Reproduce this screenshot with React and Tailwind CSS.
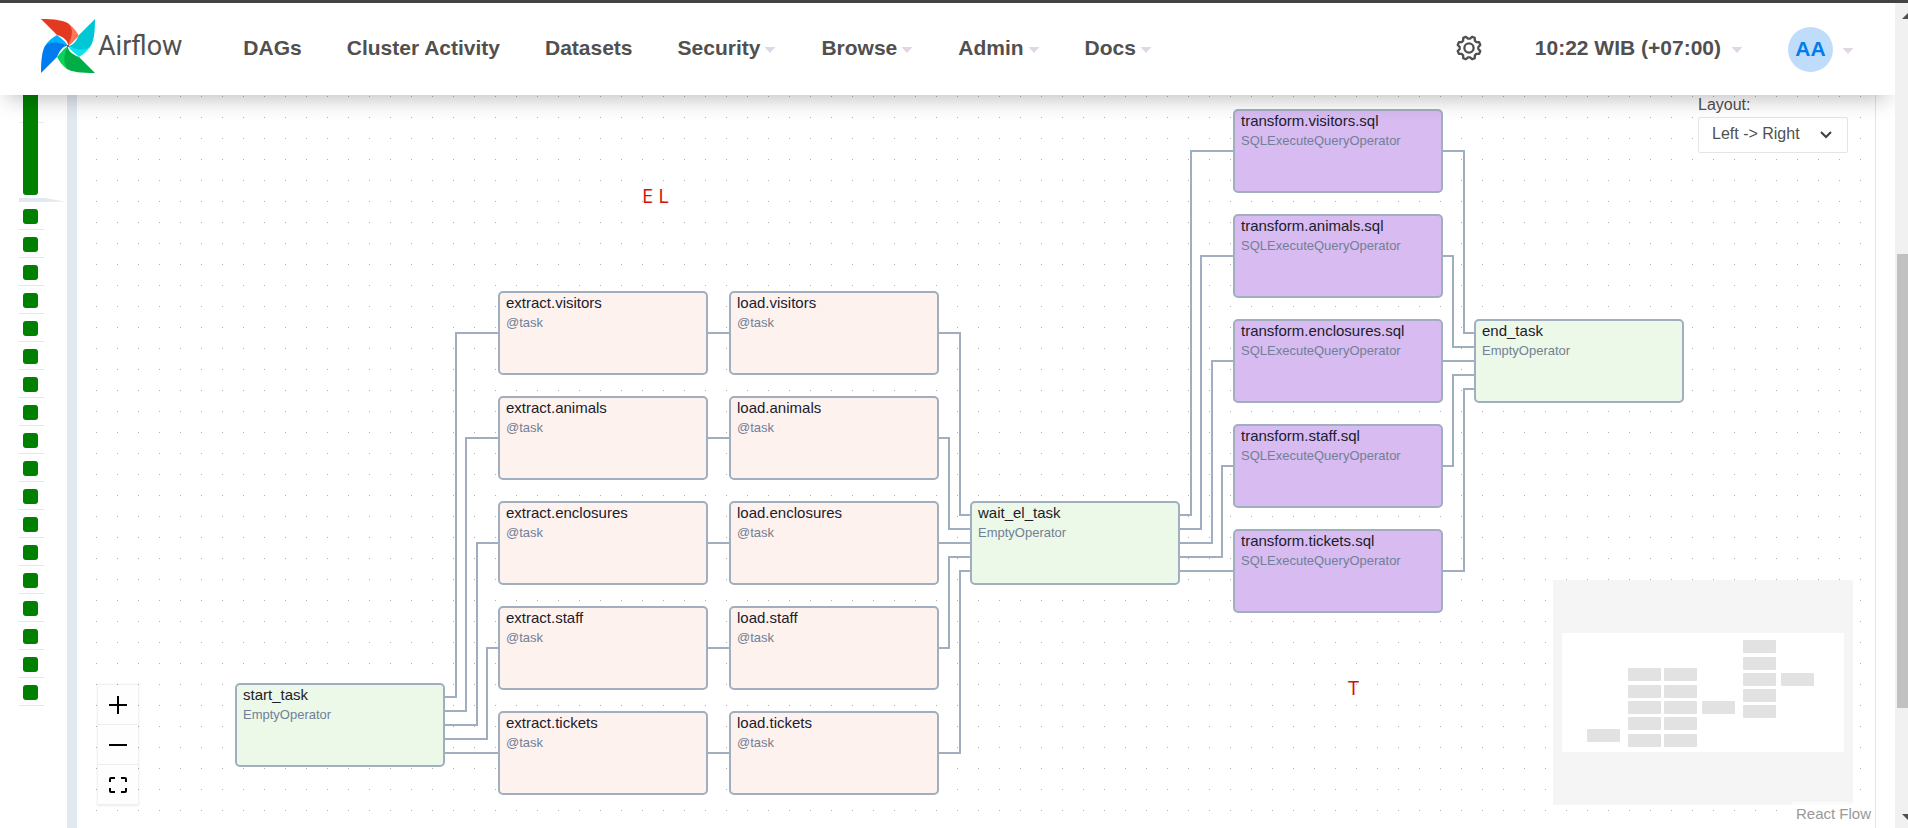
const NODE_W = 210;
const NODE_H = 84;

const subjects = ["visitors", "animals", "enclosures", "staff", "tickets"];

const green = "bg-[#ecf9e9]";
const pink = "bg-[#fef2ef]";
const purple = "bg-[#d7bbf1]";

const nodes = [
  { x: 158, y: 588, label: "start_task", op: "EmptyOperator", fill: green },
  ...subjects.map((s, i) => ({ x: 421, y: 196 + i * 105, label: `extract.${s}`, op: "@task", fill: pink })),
  ...subjects.map((s, i) => ({ x: 652, y: 196 + i * 105, label: `load.${s}`, op: "@task", fill: pink })),
  { x: 893, y: 406, label: "wait_el_task", op: "EmptyOperator", fill: green },
  ...subjects.map((s, i) => ({ x: 1156, y: 14 + i * 105, label: `transform.${s}.sql`, op: "SQLExecuteQueryOperator", fill: purple })),
  { x: 1397, y: 224, label: "end_task", op: "EmptyOperator", fill: green },
];

const edges = [
  "M368 602H379V238H422",
  "M368 616H389V343H422",
  "M368 630H400V448H422",
  "M368 644H410V553H422",
  "M368 658H422",
  "M631 238H652",
  "M631 343H652",
  "M631 448H652",
  "M631 553H652",
  "M631 658H652",
  "M862 238H883V420H893",
  "M862 343H872V434H893",
  "M862 448H893",
  "M862 553H872V462H893",
  "M862 658H883V476H893",
  "M1103 420H1114V56H1156",
  "M1103 434H1124V161H1156",
  "M1103 448H1135V266H1156",
  "M1103 462H1145V371H1156",
  "M1103 476H1156",
  "M1366 56H1387V238H1397",
  "M1366 161H1376V252H1397",
  "M1366 266H1397",
  "M1366 371H1376V280H1397",
  "M1366 476H1387V294H1397",
];

const menus = [
  { label: "DAGs" },
  { label: "Cluster Activity" },
  { label: "Datasets" },
  { label: "Security", caret: true },
  { label: "Browse", caret: true },
  { label: "Admin", caret: true },
  { label: "Docs", caret: true },
];

function Caret() {
  return (
    <svg className="mt-1 h-2 w-3 shrink-0" viewBox="0 0 12 8" aria-hidden="true">
      <path d="M0.5 1H11.5L6 7Z" fill="#e1d6e3" />
    </svg>
  );
}

function Logo() {
  return (
    <svg className="size-[54px]" viewBox="0 0 54 54" aria-hidden="true">
      <path d="M27 27C31 25 35 19 38 17C35 12 33 9 29 6C31 14 30 20 27 27Z" fill="#ff7557" />
      <path d="M27 27C28 22 21 17 16 16L0 0C12 0 25 1 29 6C33 13 30 20 27 27Z" fill="#e43921" />
      <path d="M27 27C29 31 35 35 38 38C43 35 46 32 49 28C41 31 33 30 27 27Z" fill="#11e1ee" />
      <path d="M27 27C32 27 36 21 38 16L54 0C54 13 53 23 49 28C43 32 34 31 27 27Z" fill="#00c7d4" />
      <path d="M27 27C23 29 19 35 16 38C19 43 21 46 26 50C23 42 24 33 27 27Z" fill="#04d659" />
      <path d="M27 27C26 32 33 36 38 38L54 54C40 54 31 53 26 50C22 44 23 33 27 27Z" fill="#00ad46" />
      <path d="M27 27C25 23 20 19 16 16C11 19 7 22 4 27C12 23 21 24 27 27Z" fill="#00b1fe" />
      <path d="M27 27C22 26 18 33 16 38L0 54C0 42 1 32 4 27C9 22 20 23 27 27Z" fill="#017cee" />
      <circle cx="27" cy="27" r="1" fill="#4a4848" />
    </svg>
  );
}

function Gear() {
  const corners = [
    [-7, 11.7],
    [7, 11.7],
    [16, 9.4],
    [29, 9.4],
  ];
  const points = Array.from({ length: 32 }, (_, i) => {
    const [offset, r] = corners[i % 4];
    const a = ((Math.floor(i / 4) * 45 + offset + 22.5) * Math.PI) / 180;
    return `${(13 + r * Math.cos(a)).toFixed(2)},${(13 + r * Math.sin(a)).toFixed(2)}`;
  }).join(" ");
  return (
    <svg className="size-[26px]" viewBox="0 0 26 26" fill="none" stroke="#51504f" strokeWidth="2.3" strokeLinejoin="round" aria-hidden="true">
      <polygon points={points} />
      <circle cx="13" cy="13" r="4.6" />
    </svg>
  );
}

function Header() {
  return (
    <header className="relative z-20 flex h-[92px] items-center bg-white pr-[41px] pl-[41px] text-[21px] font-bold text-[#51504f] shadow-[0_12px_20px_-8px_rgba(0,0,0,0.25)]">
      <a href="#home" className="flex items-center gap-[3px] pb-[6px]">
        <Logo />
        <span className="font-[Roboto,sans-serif] text-[27px] leading-8 font-normal">Airflow</span>
      </a>
      <nav className="ml-[61px] flex items-center gap-[45px] pb-[3px]">
        {menus.map((m) => (
          <button key={m.label} type="button" className="flex items-center gap-1 whitespace-nowrap">
            {m.label}
            {m.caret && <Caret />}
          </button>
        ))}
      </nav>
      <div className="ml-auto flex items-center">
        <button type="button" aria-label="Settings" className="mr-[53px] pb-[3px]">
          <Gear />
        </button>
        <button type="button" className="mr-[45px] flex items-center gap-[10px] pb-[3px] whitespace-nowrap">
          10:22 WIB (+07:00)
          <Caret />
        </button>
        <button type="button" className="flex items-center gap-[9px]">
          <span className="grid size-[45px] place-items-center rounded-full bg-[#bfddfb] text-[#017cee]">AA</span>
          <Caret />
        </button>
      </div>
    </header>
  );
}

function RunGrid() {
  return (
    <aside className="flex w-[67px] shrink-0 flex-col pl-[19px]" aria-label="Task runs">
      <div className="relative w-[25px] px-1">
        <div className="absolute top-[27px] left-0 h-px w-full bg-[#e2ece8]" />
        <div className="relative h-[100px] w-[15px] rounded-b-[3px] bg-[#008000]" />
      </div>
      <svg className="mt-[3px] h-1 w-[46px]" viewBox="0 0 46 4" aria-hidden="true">
        <path d="M0 0H25L46 3.4L25 4H0Z" fill="#e2e8f0" />
      </svg>
      {Array.from({ length: 18 }, (_, i) => (
        <div key={i} className="h-7 w-[25px] border-b border-[#dfe8ec] px-1 pt-[7px]">
          <div className="size-[15px] rounded-[3px] bg-[#008000]" />
        </div>
      ))}
    </aside>
  );
}

function MiniMap() {
  return (
    <svg className="absolute right-[22px] bottom-[23px] h-[225px] w-[300px] bg-white" viewBox="0 0 300 225" aria-label="Mini map">
      <path d="M0 0H300V225H0ZM9 53V172H291V53Z" fill="#f5f5f5" fillRule="evenodd" />
      {nodes.map((n) => (
        <rect
          key={n.label}
          x={Math.round(9 + n.x * 0.1566)}
          y={Math.round(58 + n.y * 0.1555)}
          width="33"
          height="13"
          rx="1"
          fill="#e2e2e2"
        />
      ))}
    </svg>
  );
}

function Controls() {
  const button = "grid size-10 place-items-center border-b border-[#eee] bg-[#fefefe]";
  return (
    <div className="absolute bottom-[23px] left-[21px] flex flex-col shadow-[0_0_2px_1px_rgba(0,0,0,0.08)]">
      <button type="button" aria-label="Zoom in" className={button}>
        <svg className="size-[18px]" viewBox="0 0 18 18" stroke="#000" strokeWidth="2"><path d="M0 9H18M9 0V18" /></svg>
      </button>
      <button type="button" aria-label="Zoom out" className={button}>
        <svg className="size-[18px]" viewBox="0 0 18 18" stroke="#000" strokeWidth="2"><path d="M0 9H18" /></svg>
      </button>
      <button type="button" aria-label="Fit view" className={button}>
        <svg className="size-[18px]" viewBox="0 0 18 18" fill="none" stroke="#000" strokeWidth="2">
          <path d="M1 6V3Q1 2 2 2H6M12 2H16Q17 2 17 3V6M17 12V15Q17 16 16 16H12M6 16H2Q1 16 1 15V12" />
        </svg>
      </button>
    </div>
  );
}

function Canvas() {
  return (
    <main className="relative min-w-0 flex-1 overflow-hidden border-r border-[#e2e4e8] bg-white bg-[radial-gradient(circle_at_0.5px_0.5px,#b0b0b4_0.6px,transparent_0.7px)] bg-size-[21px_21px] bg-position-[19px_1px]">
      <svg className="absolute top-0 left-0 h-[733px] w-[1798px]" viewBox="0 0 1798 733" fill="none" stroke="#a0aec0" strokeWidth="2" aria-hidden="true">
        {edges.map((d) => (
          <path key={d} d={d} />
        ))}
      </svg>
      {nodes.map((n) => (
        <div
          key={n.label}
          className={`absolute rounded-[5px] border-2 border-[#a0aec0] px-[6px] pt-px ${n.fill}`}
          style={{ left: n.x, top: n.y, width: NODE_W, height: NODE_H }}
        >
          <div className="text-[15px] leading-[18px] text-[#1a202c]">{n.label}</div>
          <div className="text-[13px] leading-[22px] text-[#718096]">{n.op}</div>
        </div>
      ))}
      <p className="absolute top-[87px] left-[565px] font-['Open_Sans',sans-serif] text-xl leading-7 text-[#d80c0c]">E L</p>
      <p className="absolute top-[579px] left-[1271px] font-['Open_Sans',sans-serif] text-xl leading-7 text-[#d80c0c]">T</p>
      <div className="absolute top-0 right-[27px] flex w-[150px] flex-col gap-[3px] text-base text-[#51504f]">
        <label htmlFor="layout" className="leading-[19px]">Layout:</label>
        <div className="relative">
          <select id="layout" defaultValue="lr" className="h-9 w-full appearance-none rounded-[2px] border border-[#e2e4e8] bg-white pr-8 pb-[2px] pl-[13px]">
            <option value="lr">{"Left -> Right"}</option>
            <option value="tb">{"Top -> Bottom"}</option>
          </select>
          <svg className="pointer-events-none absolute top-[14px] right-4 h-2 w-3" viewBox="0 0 12 8" fill="none" stroke="#3f3f3f" strokeWidth="2" aria-hidden="true">
            <path d="M1 1L6 6L11 1" />
          </svg>
        </div>
      </div>
      <MiniMap />
      <Controls />
      <a href="#react-flow" className="absolute right-0 bottom-[2px] bg-white/60 px-1 text-[15px] leading-6 text-[#999]">React Flow</a>
    </main>
  );
}

function ScrollBar() {
  return (
    <div className="relative flex w-[13px] shrink-0 flex-col overflow-hidden bg-[#f1f1f1] pl-[2px]" aria-hidden="true">
      <svg className="absolute top-[9px] right-0 h-[7px] w-[6px]" viewBox="0 0 6 7"><path d="M0 7L6 1V7Z" fill="#505050" /></svg>
      <div className="h-[251px]" />
      <div className="h-[454px] bg-[#c1c1c1]" />
      <svg className="absolute right-0 bottom-[7px] h-[7px] w-[6px]" viewBox="0 0 6 7"><path d="M0 0L6 6V0Z" fill="#505050" /></svg>
    </div>
  );
}

export default function App() {
  return (
    <div className="flex min-h-screen flex-col bg-white font-['Liberation_Sans',Arial,sans-serif]">
      <div className="h-[3px] bg-[#444242]" />
      <div className="flex flex-1">
        <div className="flex min-w-0 flex-1 flex-col overflow-hidden">
          <Header />
          <div className="flex flex-1 pr-[19px]">
            <RunGrid />
            <div className="w-[10px] shrink-0 bg-[#e2e8f0]" />
            <Canvas />
          </div>
        </div>
        <ScrollBar />
      </div>
    </div>
  );
}
